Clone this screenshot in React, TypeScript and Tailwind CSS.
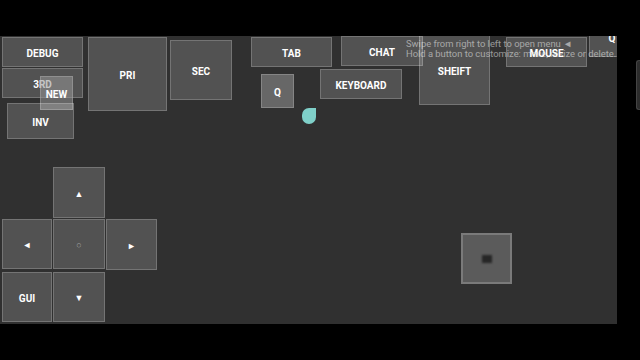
// on-screen game controls: every button sits at its saved spot on the canvas
const BUTTONS = [
  { label: 'DEBUG', pos: 'left-[2px] top-[1px] w-[81px] h-[30px]' },
  { label: '3RD', pos: 'left-[2px] top-[32px] w-[81px] h-[30px]' },
  { label: 'NEW', pos: 'left-[40px] top-[40px] w-[33px] h-[34px]', light: true },
  { label: 'INV', pos: 'left-[7px] top-[67px] w-[67px] h-[36px]' },
  { label: 'PRI', pos: 'left-[88px] top-[1px] w-[79px] h-[74px]' },
  { label: 'SEC', pos: 'left-[170px] top-[4px] w-[62px] h-[60px]' },
  { label: 'TAB', pos: 'left-[251px] top-[1px] w-[81px] h-[30px]' },
  { label: 'CHAT', pos: 'left-[341px] top-[0px] w-[82px] h-[30px]' },
  { label: 'Q', pos: 'left-[261px] top-[38px] w-[33px] h-[34px]', light: true },
  { label: 'KEYBOARD', pos: 'left-[320px] top-[33px] w-[82px] h-[30px]' },
  { label: 'SHEIFT', pos: 'left-[419px] top-[-1px] w-[71px] h-[70px]' },
  { label: 'MOUSE', pos: 'left-[506px] top-[1px] w-[81px] h-[30px]' },
  { label: 'Q', pos: 'left-[589px] top-[-19px] w-[46px] h-[40px]' },
  { label: '▲', pos: 'left-[53px] top-[131px] w-[52px] h-[51px]', small: true },
  { label: '◄', pos: 'left-[2px] top-[183px] w-[50px] h-[50px]', small: true },
  { label: '○', pos: 'left-[53px] top-[183px] w-[52px] h-[50px]', small: true, dim: true },
  { label: '►', pos: 'left-[106px] top-[183px] w-[51px] h-[51px]', small: true },
  { label: 'GUI', pos: 'left-[2px] top-[236px] w-[50px] h-[50px]' },
  { label: '▼', pos: 'left-[53px] top-[236px] w-[52px] h-[50px]', small: true },
]

function Control({ label, pos, light, small, dim }: { label: string; pos: string; light?: boolean; small?: boolean; dim?: boolean }) {
  return (
    <div
      className={`absolute ${pos} flex items-center justify-center border ${
        light ? 'bg-[rgba(150,150,150,0.55)] border-[rgba(190,190,190,0.35)]' : 'bg-[rgba(255,255,255,0.17)] border-[rgba(255,255,255,0.2)]'
      }`}
    >
      <span
        className={`mt-[3px] font-['Roboto',sans-serif] font-bold leading-none ${small ? 'text-[9px]' : 'text-[10px]'} ${
          dim ? 'text-[#a0a0a0]' : 'text-white'
        }`}
      >
        {label}
      </span>
    </div>
  )
}

export default function App() {
  return (
    <div className="relative w-[640px] h-[360px] bg-black pt-[36px] overflow-hidden">
      <div className="relative w-[617px] h-[288px] bg-[#303030] overflow-hidden">
        {BUTTONS.map((b, i) => (
          <Control key={i} {...b} />
        ))}

        {/* joystick-ish square */}
        <div className="absolute left-[461px] top-[197px] w-[51px] h-[51px] flex items-center justify-center bg-[#5b5b5b] border-2 border-[#7a7a7a]">
          <div className="w-[10px] h-[8px] bg-[#262626] blur-[1px]" />
        </div>

        {/* touch handle */}
        <div className="absolute left-[302px] top-[72px] w-[14px] h-[16px] bg-[#7fd0c9] rounded-full rounded-tr-[4px]" />

        <div className="absolute left-[406px] top-[3px] font-['Roboto',sans-serif] text-[9.4px] leading-[10px] text-white/50 whitespace-nowrap">
          <div>Swipe from right to left to open menu ◄</div>
          <div>Hold a button to customize: move, resize or delete.</div>
        </div>
      </div>

      <div className="absolute right-0 top-[60px] w-[4px] h-[50px] rounded-l-[3px] bg-[#2c2c2c] border border-r-0 border-[#444]" />
    </div>
  )
}
